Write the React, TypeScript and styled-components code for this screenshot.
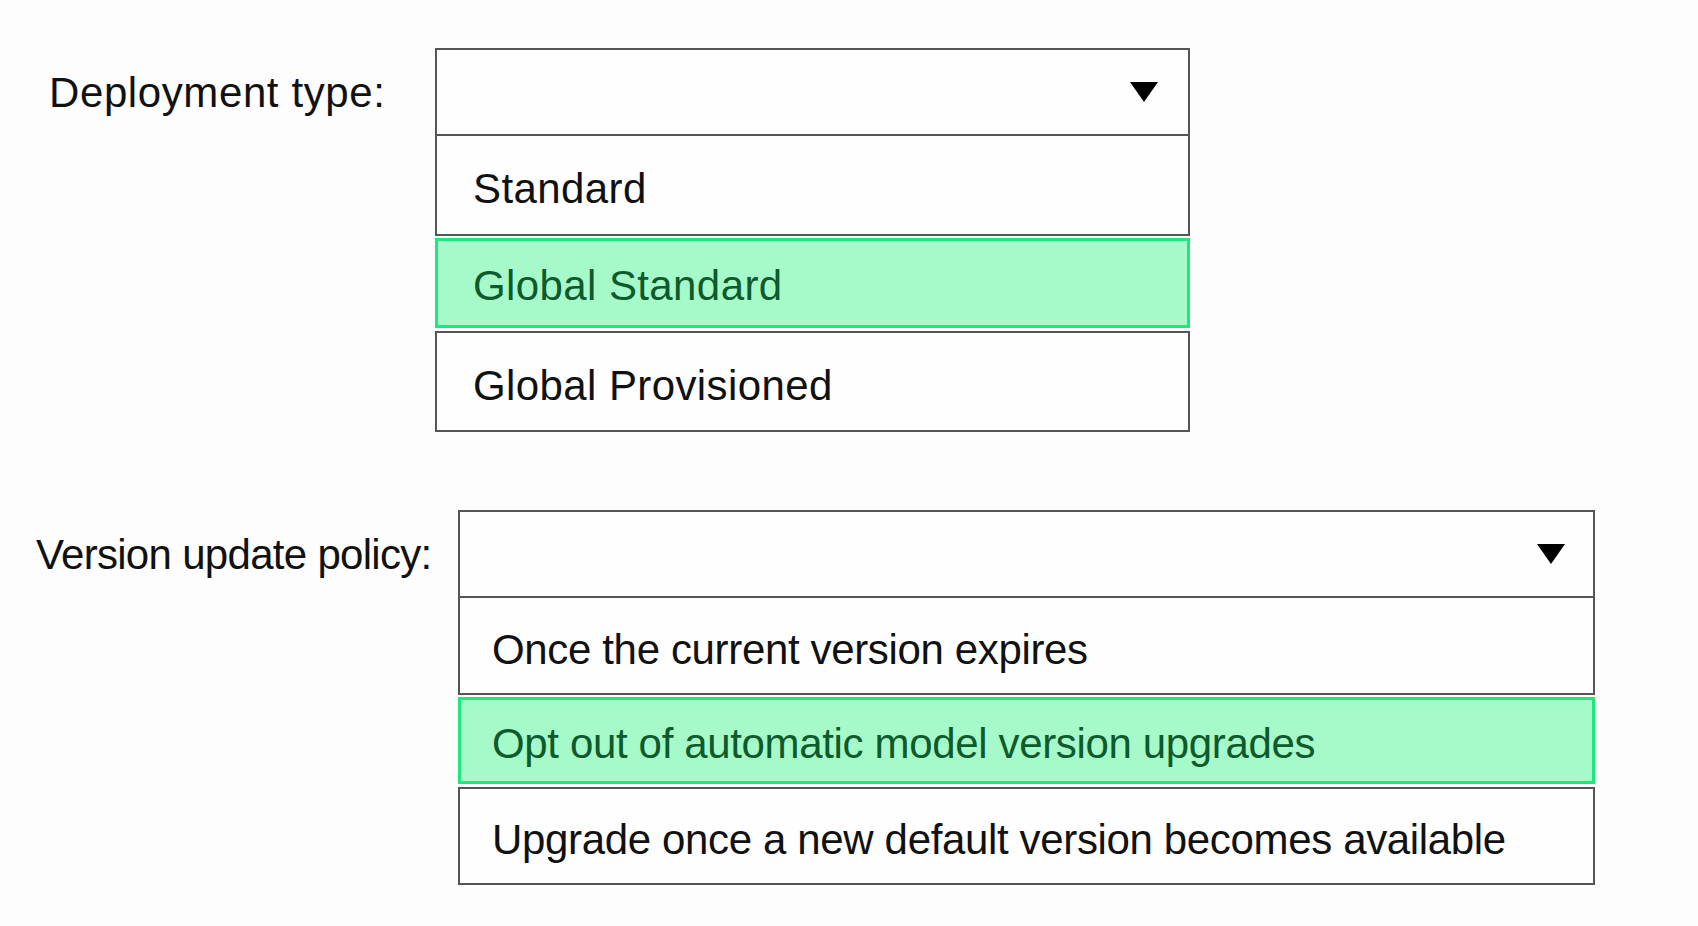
import React from "react";
import styled, { createGlobalStyle } from "styled-components";

const GlobalStyle = createGlobalStyle`
  html, body {
    margin: 0;
    padding: 0;
    background: #fdfdfd;
  }
  body {
    font-family: "Liberation Sans", Arial, Helvetica, sans-serif;
    color: #111;
  }
`;

const Page = styled.div`
  display: flex;
  flex-direction: column;
  gap: 78px;
  padding-top: 48px;
  min-height: 926px;
  box-sizing: border-box;
`;

const Row = styled.div<{ $indent: number; $labelWidth: number }>`
  display: grid;
  grid-template-columns: ${(p) => p.$labelWidth}px auto;
  align-items: start;
  padding-left: ${(p) => p.$indent}px;
`;

const Label = styled.div<{ $tracking: number }>`
  height: 88px;
  display: flex;
  align-items: center;
  padding-top: 2px;
  box-sizing: border-box;
  font-size: 42px;
  letter-spacing: ${(p) => p.$tracking}px;
  color: #111;
  white-space: nowrap;
`;

const Select = styled.div<{ $width: number; $tracking: number }>`
  width: ${(p) => p.$width}px;
  display: flex;
  flex-direction: column;
  font-size: 42px;
  letter-spacing: ${(p) => p.$tracking}px;
`;

const Header = styled.div<{ $arrowGap: number }>`
  height: 88px;
  box-sizing: border-box;
  border: 2px solid #555;
  background: #fefefe;
  display: flex;
  align-items: center;
  justify-content: flex-end;
  padding-right: ${(p) => p.$arrowGap}px;
`;

const Caret = styled.span`
  width: 0;
  height: 0;
  border-left: 14px solid transparent;
  border-right: 14px solid transparent;
  border-top: 20px solid #000;
`;

const Menu = styled.div`
  display: flex;
  flex-direction: column;
`;

const Option = styled.div<{ $pad: number; $h: number; $first?: boolean }>`
  height: ${(p) => (p.$first ? p.$h : p.$h + 1)}px;
  box-sizing: border-box;
  border-left: 2px solid #555;
  border-right: 2px solid #555;
  border-bottom: 2px solid #555;
  border-top: ${(p) => (p.$first ? "none" : "2px solid #555")};
  display: flex;
  align-items: center;
  padding-left: ${(p) => p.$pad}px;
  padding-top: 8px;
  color: #111;
  background: #fefefe;
  white-space: nowrap;
`;

const Selected = styled.div<{ $pad: number; $h: number }>`
  height: ${(p) => p.$h}px;
  margin: 2px 0 3px;
  box-sizing: border-box;
  border: 3px solid #1ee87b;
  background: #a6f9c8;
  display: flex;
  align-items: center;
  padding-left: ${(p) => p.$pad - 1}px;
  padding-top: 6px;
  color: #0d5a2d;
  white-space: nowrap;
`;

type DropdownProps = {
  width: number;
  pad: number;
  arrowGap: number;
  itemHeight: number;
  tracking: number;
  options: string[];
  selected: number;
};

const Dropdown = ({
  width,
  pad,
  arrowGap,
  itemHeight,
  tracking,
  options,
  selected,
}: DropdownProps) => (
  <Select $width={width} $tracking={tracking}>
    <Header $arrowGap={arrowGap}>
      <Caret />
    </Header>
    <Menu>
      {options.map((o, i) =>
        i === selected ? (
          <Selected key={o} $pad={pad} $h={itemHeight - 10}>
            {o}
          </Selected>
        ) : (
          <Option key={o} $pad={pad} $h={itemHeight} $first={i === 0}>
            {o}
          </Option>
        )
      )}
    </Menu>
  </Select>
);

export default function App() {
  return (
    <>
      <GlobalStyle />
      <Page>
        <Row $indent={49} $labelWidth={386}>
          <Label $tracking={0.6}>Deployment type:</Label>
          <Dropdown
            width={755}
            pad={36}
            arrowGap={30}
            itemHeight={100}
            tracking={0.4}
            selected={1}
            options={["Standard", "Global Standard", "Global Provisioned"]}
          />
        </Row>
        <Row $indent={36} $labelWidth={422}>
          <Label $tracking={-0.7}>Version update policy:</Label>
          <Dropdown
            width={1137}
            pad={32}
            arrowGap={28}
            itemHeight={97}
            tracking={-0.35}
            selected={1}
            options={[
              "Once the current version expires",
              "Opt out of automatic model version upgrades",
              "Upgrade once a new default version becomes available",
            ]}
          />
        </Row>
      </Page>
    </>
  );
}
